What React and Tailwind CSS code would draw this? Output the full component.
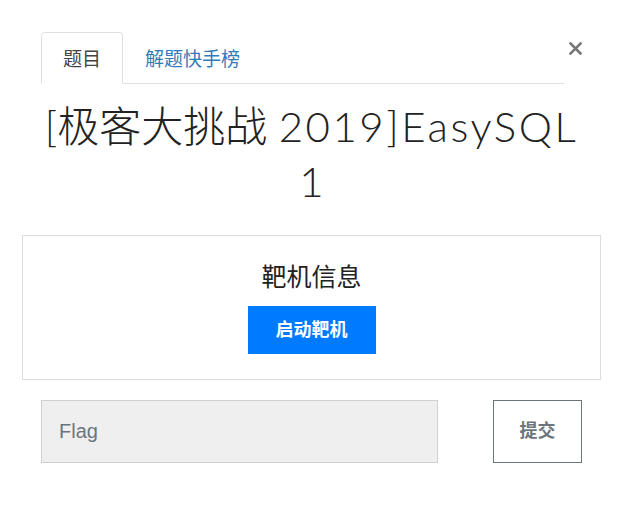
import { useState } from 'react';

export default function App() {
    const [flag, setFlag] = useState('');
    const [tab, setTab] = useState('problem');

    return (
        <div className="w-[621px] h-[520px] bg-white pl-[22px] pr-[20px] pt-[32px]" style={{ fontFamily: '"Liberation Sans", "Noto Sans CJK SC", sans-serif' }}>
            {/* Tabs */}
            <div className="flex mx-[19px] items-start">
                <div className="flex flex-1 border-b border-[#dee2e6]">
                    <button
                        onClick={() => setTab('problem')}
                        className={`h-[52px] px-[21px] pt-1 text-[19px] rounded-t-[4px] -mb-px border ${tab === 'problem' ? 'border-[#dee2e6] border-b-white bg-white text-[#444]' : 'border-transparent text-[#337ab7]'}`}
                    >
                        题目
                    </button>
                    <button
                        onClick={() => setTab('rank')}
                        className={`h-[52px] px-[21px] pt-1 text-[19px] rounded-t-[4px] -mb-px border ${tab === 'rank' ? 'border-[#dee2e6] border-b-white bg-white text-[#444]' : 'border-transparent text-[#337ab7]'}`}
                    >
                        解题快手榜
                    </button>
                </div>
                <button className="w-[16px] ml-[2px] mt-[10px] flex justify-end text-[#777]">
                    <svg width="13" height="13" viewBox="0 0 13 13">
                        <path d="M1.5 1.5 L11.5 11.5 M11.5 1.5 L1.5 11.5" stroke="currentColor" strokeWidth="2.6" strokeLinecap="square" />
                    </svg>
                </button>
            </div>

            {/* Title */}
            <h1 className="mx-[19px] mt-[15px] text-center text-[42px] leading-[55px] font-light text-[#222]" style={{ fontFamily: 'Lato, "Noto Sans CJK SC", sans-serif' }}>
                [极客大挑战 <span className="tracking-[2.5px]">2019]EasySQL</span> 1
            </h1>

            {/* Target info */}
            <div className="mt-[26px] h-[145px] border border-[#dcdcdc] flex flex-col items-center pt-[26px]">
                <h4 className="text-[25px] leading-[30px] text-[#222]">靶机信息</h4>
                <button className="mt-[14px] w-[128px] h-[48px] bg-[#007bff] text-white text-[18px] font-bold flex items-center justify-center">
                    启动靶机
                </button>
            </div>

            {/* Flag */}
            <div className="mx-[19px] mt-[20px] flex justify-between">
                <input
                    type="text"
                    value={flag}
                    onChange={e => setFlag(e.target.value)}
                    placeholder="Flag"
                    className="w-[397px] h-[63px] bg-[#efefef] border border-[#d0d0d0] px-[17px] text-[20px] text-[#333] placeholder:text-[#6c757d] outline-none"
                />
                <button className="w-[89px] h-[63px] border border-[#6c757d] text-[#6c757d] text-[18px] font-bold">
                    提交
                </button>
            </div>
        </div>
    );
}
